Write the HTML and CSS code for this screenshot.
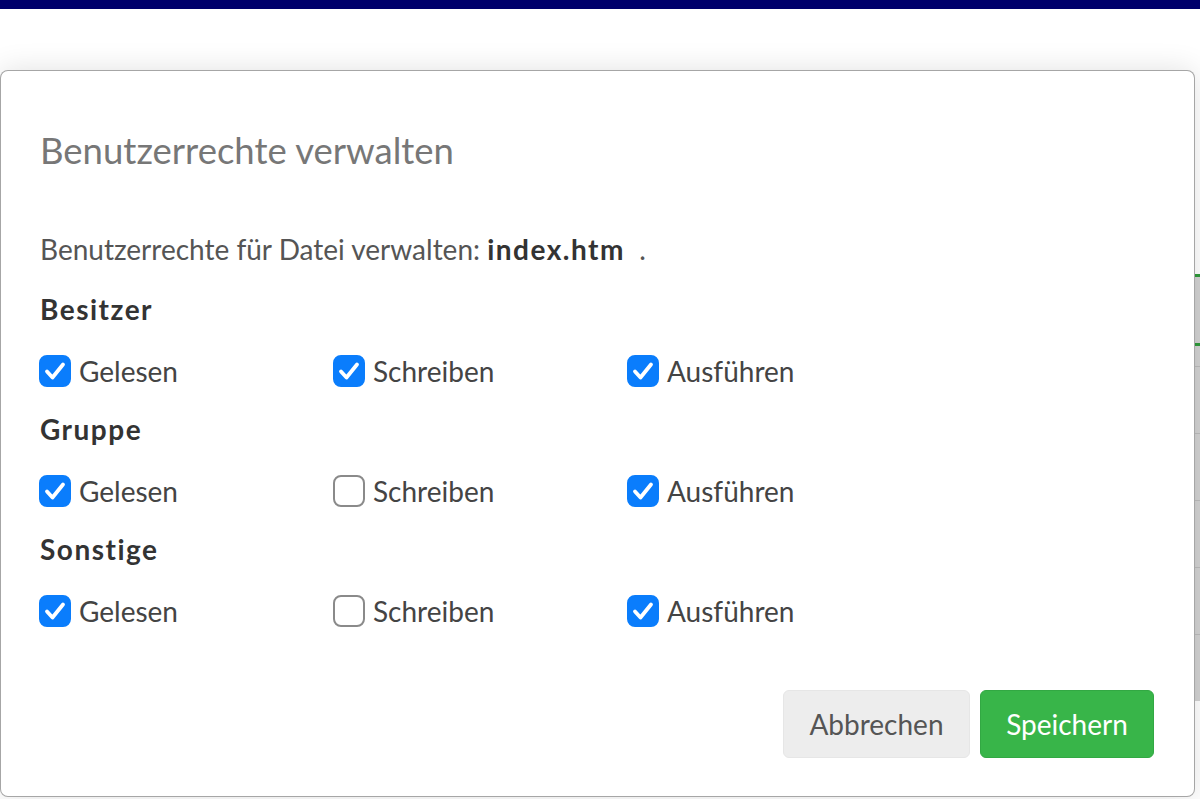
FILE: index.html
```html
<!DOCTYPE html>
<html lang="de">
<head>
    <meta charset="UTF-8">
    <meta name="viewport" content="width=device-width, initial-scale=1.0">
    <title>Benutzerrechte verwalten</title>
    <link rel="stylesheet" href="styles.css">
</head>
<body>
    <div class="topbar"></div>

    <!-- page behind the dialog -->
    <div class="files">
        <div class="file-row green"></div>
        <div class="file-row green short"></div>
        <div class="file-row"></div>
        <div class="file-row"></div>
        <div class="file-row"></div>
        <div class="file-row"></div>
        <div class="file-row"></div>
    </div>

    <div class="modal">
        <div class="modal-header">
            <h2 class="modal-title">Benutzerrechte verwalten</h2>
        </div>
        <div class="modal-body">
            <p class="intro">Benutzerrechte für Datei verwalten: <b>index.htm</b>&nbsp; .</p>

            <h4>Besitzer</h4>
            <div class="perm-row">
                <label class="check on"><span class="box"><svg viewBox="0 0 28 28"><path d="M6 14.5 L11.5 20.5 L22 7.5"/></svg></span>Gelesen</label>
                <label class="check on"><span class="box"><svg viewBox="0 0 28 28"><path d="M6 14.5 L11.5 20.5 L22 7.5"/></svg></span>Schreiben</label>
                <label class="check on"><span class="box"><svg viewBox="0 0 28 28"><path d="M6 14.5 L11.5 20.5 L22 7.5"/></svg></span>Ausführen</label>
            </div>

            <h4>Gruppe</h4>
            <div class="perm-row">
                <label class="check on"><span class="box"><svg viewBox="0 0 28 28"><path d="M6 14.5 L11.5 20.5 L22 7.5"/></svg></span>Gelesen</label>
                <label class="check"><span class="box"></span>Schreiben</label>
                <label class="check on"><span class="box"><svg viewBox="0 0 28 28"><path d="M6 14.5 L11.5 20.5 L22 7.5"/></svg></span>Ausführen</label>
            </div>

            <h4>Sonstige</h4>
            <div class="perm-row">
                <label class="check on"><span class="box"><svg viewBox="0 0 28 28"><path d="M6 14.5 L11.5 20.5 L22 7.5"/></svg></span>Gelesen</label>
                <label class="check"><span class="box"></span>Schreiben</label>
                <label class="check on"><span class="box"><svg viewBox="0 0 28 28"><path d="M6 14.5 L11.5 20.5 L22 7.5"/></svg></span>Ausführen</label>
            </div>
        </div>
        <div class="modal-footer">
            <button class="btn btn-default">Abbrechen</button>
            <button class="btn btn-success">Speichern</button>
        </div>
    </div>
</body>
</html>
```

FILE: styles.css
```css
body {
    margin: 0;
    font-family: 'Lato', 'Open Sans', sans-serif;
    background: #fff;
    height: 799px;
    overflow: hidden;
    position: relative;
}

.topbar {
    height: 9px;
    background: #00006b;
}

/* file list behind the dialog */
.files {
    margin: 265px 0 0 auto;
    width: 400px;
    background: #d2d2d2;
}

.file-row {
    height: 66px;
    border-top: 1px solid #bbb;
}

.file-row.green {
    border-top: 3px solid #2f9a3a;
}

.file-row.short {
    height: 20px;
}

/* dialog */
.modal {
    position: absolute;
    top: 70px;
    left: 0;
    width: 1195px;
    height: 727px;
    box-sizing: border-box;
    background: #fff;
    border: 1px solid rgba(0, 0, 0, 0.35);
    border-radius: 8px;
    box-shadow: 0 0 30px rgba(0, 0, 0, 0.12);
    padding: 0 39px;
}

.modal-header {
    padding-top: 58px;
}

.modal-title {
    margin: 0;
    font-size: 36.5px;
    line-height: 42px;
    font-weight: normal;
    color: #777;
}

.modal-body {
    padding-top: 60px;
}

.intro {
    margin: 0;
    font-size: 28px;
    line-height: 36px;
    color: #555;
}

.intro b {
    color: #333;
    letter-spacing: 1.5px;
}

h4 {
    margin: 24px 0 0;
    font-size: 28px;
    line-height: 36px;
    font-weight: bold;
    letter-spacing: 1.5px;
    color: #333;
}

.perm-row + h4 {
    margin-top: 22px;
}

.perm-row {
    margin: 26px 0 0 -1px;
    display: grid;
    grid-template-columns: 294px 294px 294px;
}

.check {
    display: flex;
    align-items: center;
    gap: 8px;
    height: 36px;
    font-size: 28px;
    color: #444;
}

.box {
    width: 32px;
    height: 32px;
    box-sizing: border-box;
    border: 2px solid #8a8a8a;
    border-radius: 8px;
    background: #fff;
    flex-shrink: 0;
}

.check.on .box {
    border-color: #0a7dfc;
    background: #0a7dfc;
}

.box svg {
    display: block;
    width: 28px;
    height: 28px;
    fill: none;
    stroke: #fff;
    stroke-width: 3.8;
    stroke-linecap: round;
    stroke-linejoin: round;
}

.modal-footer {
    margin-top: 61px;
    display: flex;
    justify-content: flex-end;
    gap: 10px;
    padding-right: 1px;
}

.btn {
    height: 68px;
    padding: 0;
    border-radius: 6px;
    font-family: 'Lato', sans-serif;
    font-size: 28px;
    cursor: pointer;
}

.btn-default {
    width: 187px;
    background: #ededed;
    border: 1px solid #e6e6e6;
    color: #555;
}

.btn-success {
    width: 174px;
    background: #38b549;
    border: 1px solid #32a843;
    color: #fff;
}
```
